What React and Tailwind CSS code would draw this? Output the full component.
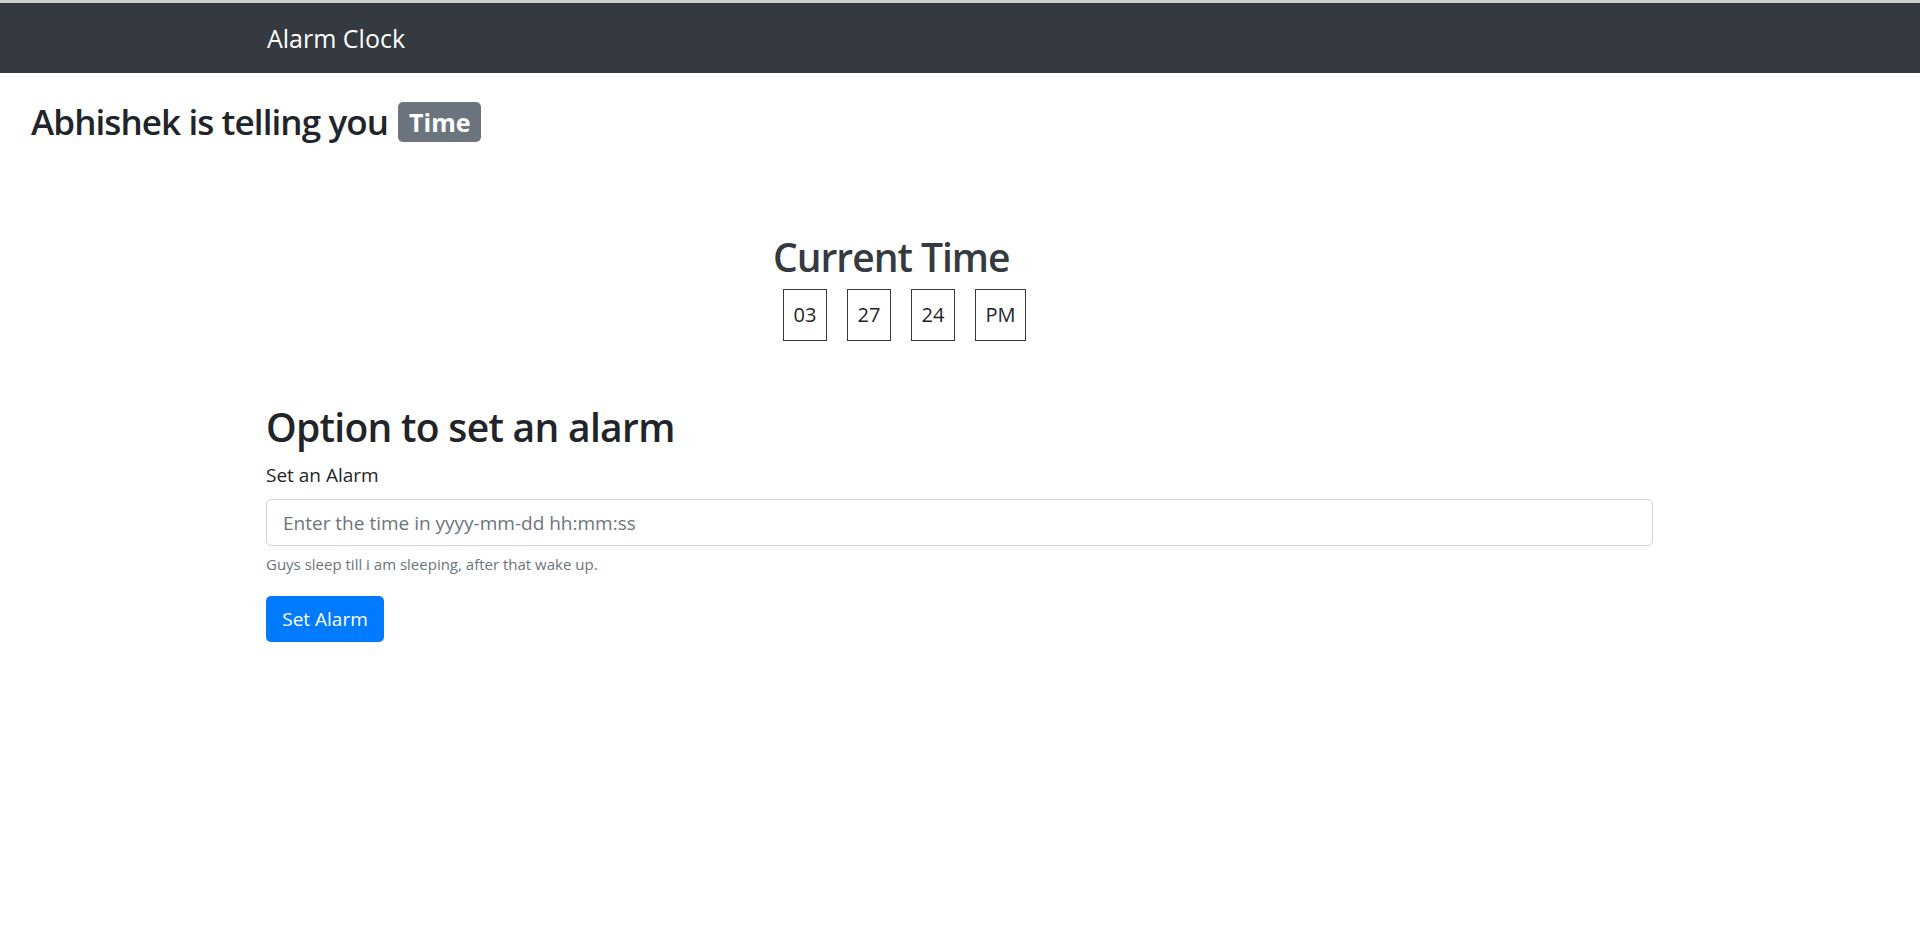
import React from 'react';

const font = { fontFamily: '"Open Sans", "Noto Sans", sans-serif' };

const TimeBox = ({ value, wide }) => (
  <div className={`h-[52px] ${wide ? 'w-[51px]' : 'w-[44px]'} border border-[#343a40] flex items-center justify-center text-[20px] text-[#212529]`}>
    {value}
  </div>
);

export default function App() {
  return (
    <div className="min-h-screen bg-white" style={font}>
      <div className="h-[3px] bg-[#cfcfcf]" />
      <nav className="h-[70px] bg-[#343a40] flex items-center">
        <span className="ml-[267px] text-[25px] text-white leading-none">Alarm Clock</span>
      </nav>

      {/* Heading */}
      <div className="ml-[31px] mt-[25px] flex items-center">
        <h3 className="text-[35px] font-semibold text-[#212529] leading-[48px] tracking-[-0.9px]">Abhishek is telling you</h3>
        <span className="ml-[10px] h-[40px] px-[11px] flex items-center rounded-[5px] bg-[#6c757d] text-white text-[25px] font-bold leading-none">Time</span>
      </div>

      {/* Clock */}
      <div className="mt-[87px] ml-[773px]">
        <h2 className="text-[39px] font-semibold text-[#343a40] leading-[48px] tracking-[-1px]">Current Time</h2>
      </div>
      <div className="ml-[783px] mt-[8px] flex gap-[20px]">
        <TimeBox value="03" />
        <TimeBox value="27" />
        <TimeBox value="24" />
        <TimeBox value="PM" wide />
      </div>

      {/* Alarm form */}
      <div className="ml-[266px] w-[1387px] mt-[62px]">
        <h2 className="text-[39px] font-semibold text-[#212529] leading-[48px] tracking-[-0.7px]">Option to set an alarm</h2>
        <label className="block mt-[10px] text-[19px] text-[#212529] leading-[28px]">Set an Alarm</label>
        <input
          type="text"
          placeholder="Enter the time in yyyy-mm-dd hh:mm:ss"
          className="mt-[10px] block w-full h-[47px] px-[16px] border border-[#ced4da] rounded-[5px] text-[19px] text-[#495057] placeholder:text-[#6c757d] outline-none"
          style={font}
        />
        <p className="mt-[6px] text-[15px] text-[#6c757d] leading-[24px]">Guys sleep till i am sleeping, after that wake up.</p>
        <button
          className="mt-[20px] w-[118px] h-[46px] rounded-[5px] bg-[#007bff] text-white text-[19px]"
          style={font}
        >
          Set Alarm
        </button>
      </div>
    </div>
  );
}
